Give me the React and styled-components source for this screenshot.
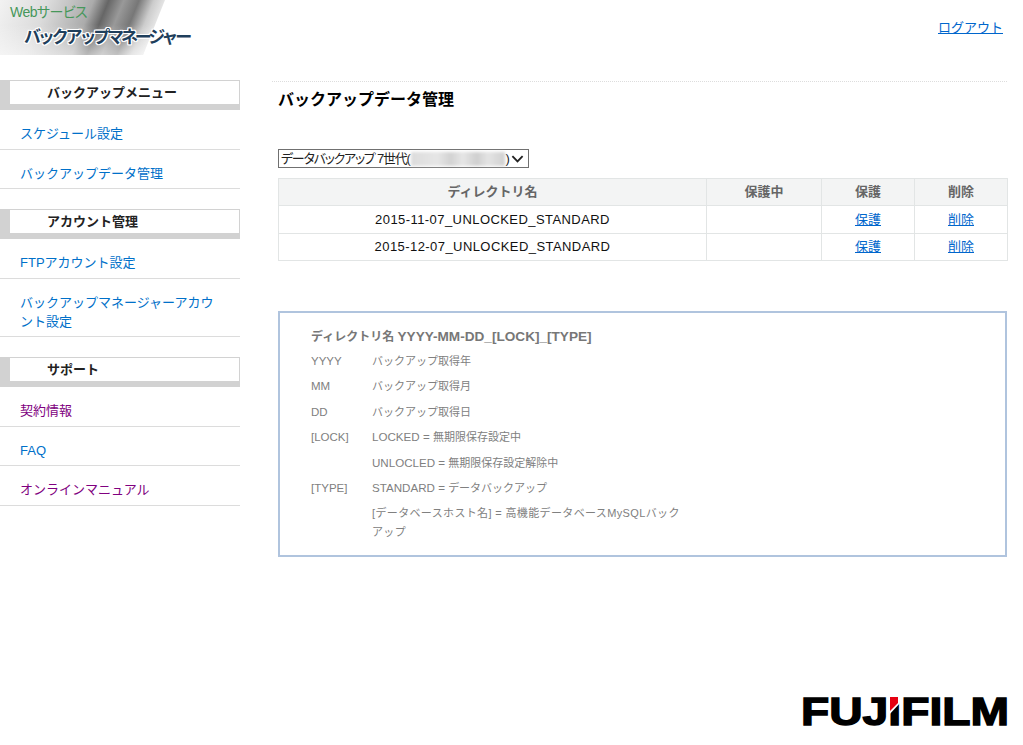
import styled, { createGlobalStyle } from 'styled-components';

const GlobalStyle = createGlobalStyle`
  html, body {
    margin: 0;
    padding: 0;
    background: #fff;
  }
  body {
    font-family: "Liberation Sans", "Noto Sans CJK JP", sans-serif;
    font-size: 13px;
    color: #000;
  }
`;

const Page = styled.div`
  width: 1023px;
  height: 745px;
  display: flex;
  flex-direction: column;
  overflow: hidden;
`;

const Header = styled.header`
  height: 55px;
  flex: none;
  display: flex;
  justify-content: space-between;
  align-items: flex-start;
`;

const Banner = styled.div`
  position: relative;
  width: 165px;
  height: 55px;
  padding: 3px 0 0 10px;
  box-sizing: border-box;
  white-space: nowrap;

  &::before {
    content: '';
    position: absolute;
    inset: 0;
    z-index: 0;
    clip-path: polygon(0 0, 100% 0, 143px 100%, 0 100%);
    background:
      linear-gradient(to bottom, rgba(255, 255, 255, 0) 45%, rgba(255, 255, 255, 0.55) 100%),
      linear-gradient(
        112deg,
        #f2f2f2 0,
        #dcdcdc 45px,
        #ababab 87px,
        #666666 101px,
        #999999 115px,
        #777777 129px,
        #cccccc 143px,
        #ececec 156px
      );
  }
`;

const BannerSmall = styled.div`
  position: relative;
  font-size: 14px;
  line-height: 19px;
  color: #46975a;
  font-feature-settings: "palt";
  letter-spacing: -0.55px;
`;

const BannerTitle = styled.div`
  position: relative;
  margin: 6px 0 0 14px;
  font-size: 17px;
  line-height: 20px;
  font-weight: 700;
  color: #1f3f5c;
  letter-spacing: -3.15px;
  text-shadow: 1px 0 0 #fff, -1px 0 0 #fff, 0 1px 0 #fff, 0 -1px 0 #fff,
    1px 1px 0 #fff, -1px -1px 0 #fff, 1px -1px 0 #fff, -1px 1px 0 #fff;
`;

const LogoutLink = styled.a`
  margin: 19px 20px 0 0;
  line-height: 18px;
  color: #0066cc;
  text-decoration: underline;
`;

const Body = styled.div`
  display: flex;
  align-items: flex-start;
  padding-top: 25px;
`;

const Sidebar = styled.nav`
  width: 240px;
  flex: none;
`;

const SectionTitle = styled.h2`
  margin: 0;
  box-sizing: border-box;
  height: 30px;
  padding-left: 37px;
  border: 1px solid #d2d2d2;
  border-left-width: 10px;
  border-bottom-width: 6px;
  font-size: 13px;
  line-height: 23px;
  font-weight: 700;
  color: #222;
`;

const MenuList = styled.ul`
  list-style: none;
  margin: 0 0 20px;
  padding: 0;
`;

const MenuItem = styled.li`
  padding: 14px 20px 5.5px;
  border-bottom: 1px solid #dcdcdc;
  line-height: 19px;
`;

const MenuLink = styled.a`
  color: ${(p) => (p.$visited ? '#800080' : '#0070c9')};
  text-decoration: none;
`;

const Main = styled.main`
  margin: 1px 0 0 32px;
  width: 735px;
`;

const PageTitle = styled.h1`
  margin: 0 0 38px;
  padding: 7px 0 0 6px;
  border-top: 1px dotted #dddddd;
  font-size: 16px;
  line-height: 22px;
  font-weight: 700;
  color: #000;
`;

const Content = styled.div`
  margin-left: 6px;
`;

const SelectBox = styled.div`
  box-sizing: border-box;
  width: 251px;
  height: 19px;
  margin-bottom: 10px;
  padding: 0 2px;
  border: 1px solid #707070;
  display: flex;
  align-items: center;
  font-size: 13px;
  line-height: 17px;
  color: #222;
  white-space: nowrap;
`;

const SelectLabel = styled.span`
  font-feature-settings: "palt";
  letter-spacing: -1.25px;
`;

const BlurredHost = styled.span`
  display: inline-block;
  width: 94px;
  height: 14px;
  margin: 0 1px;
  background: linear-gradient(
    90deg,
    #dcdcdc 0,
    #e6e6e6 28%,
    #d2d2d2 42%,
    #e6e6e6 55%,
    #cfcfcf 70%,
    #e4e4e4 82%,
    #d0d0d0 100%
  );
  filter: blur(1.5px);
`;

const Chevron = styled.svg`
  width: 13px;
  height: 10px;
  margin: 0 2px 0 auto;
  flex: none;
`;

const DataTable = styled.table`
  width: 730px;
  table-layout: fixed;
  border-collapse: collapse;
  font-size: 13px;
`;

const HeadCell = styled.th`
  height: 26px;
  padding: 0;
  border: 1px solid #e2e5e5;
  background: #f3f4f4;
  color: #666;
  font-weight: 700;
  text-align: center;
  line-height: 18px;
`;

const Cell = styled.td`
  height: 27.5px;
  padding: 1px 0 0;
  box-sizing: border-box;
  border: 1px solid #e2e5e5;
  color: #111;
  text-align: center;
  line-height: 18px;
`;

const NameCell = styled(Cell)`
  letter-spacing: 0.43px;
`;

const TableLink = styled.a`
  color: #0066cc;
  text-decoration: underline;
`;

const Legend = styled.section`
  box-sizing: border-box;
  width: 729px;
  height: 246px;
  margin-top: 50px;
  padding: 14px 31px 0;
  border: 2px solid #b0c4de;
  color: #808080;
  font-size: 11px;
`;

const LegendTitle = styled.div`
  font-size: 12px;
  font-weight: 700;
  line-height: 20px;
  color: #777;
  margin-bottom: 5px;
`;

const LegendCode = styled.span`
  font-size: 13.6px;
  line-height: 1;
`;

const LegendRow = styled.div`
  display: grid;
  grid-template-columns: 61px 310px;
  line-height: 19px;
  margin-bottom: 6.4px;
`;

const LegendLabel = styled.span`
  font-size: 11.5px;
`;

const LegendLatin = styled.span`
  font-size: 11.6px;
  line-height: 1;
`;

const LegendValue = styled.span`
  letter-spacing: ${(p) => (p.$wide ? '0.36px' : '0')};
`;

const rows = [
  ['YYYY', '', 'バックアップ取得年'],
  ['MM', '', 'バックアップ取得月'],
  ['DD', '', 'バックアップ取得日'],
  ['[LOCK]', 'LOCKED = ', '無期限保存設定中'],
  ['', 'UNLOCLED = ', '無期限保存設定解除中'],
  ['[TYPE]', 'STANDARD = ', 'データバックアップ'],
  ['', '', '[データベースホスト名] = 高機能データベースMySQLバックアップ', true],
];

const directories = ['2015-11-07_UNLOCKED_STANDARD', '2015-12-07_UNLOCKED_STANDARD'];

const Footer = styled.footer`
  margin-top: auto;
  padding: 0 13px 10px 0;
  display: flex;
  justify-content: flex-end;
`;

const FujifilmLogo = () => (
  <svg width="210" height="46" viewBox="0 0 210 46" role="img" aria-label="FUJIFILM">
    <text
      x="1"
      y="36"
      textLength="208"
      lengthAdjust="spacingAndGlyphs"
      fontFamily="Liberation Sans"
      fontWeight="700"
      fontSize="39"
      fill="#000"
      stroke="#000"
      strokeWidth="1.4"
    >
      FUJIFILM
    </text>
    <polygon points="87,6 102,6 102,12 87,28" fill="#fff" />
    <polygon points="90,8 98,8 98,14 90,22" fill="#e60012" />
  </svg>
);

const App = () => (
  <Page>
    <GlobalStyle />
    <Header>
      <Banner>
        <BannerSmall>Webサービス</BannerSmall>
        <BannerTitle>バックアップマネージャー</BannerTitle>
      </Banner>
      <LogoutLink href="#">ログアウト</LogoutLink>
    </Header>
    <Body>
      <Sidebar>
        <SectionTitle>バックアップメニュー</SectionTitle>
        <MenuList>
          <MenuItem><MenuLink href="#">スケジュール設定</MenuLink></MenuItem>
          <MenuItem><MenuLink href="#">バックアップデータ管理</MenuLink></MenuItem>
        </MenuList>
        <SectionTitle>アカウント管理</SectionTitle>
        <MenuList>
          <MenuItem><MenuLink href="#">FTPアカウント設定</MenuLink></MenuItem>
          <MenuItem><MenuLink href="#">バックアップマネージャーアカウント設定</MenuLink></MenuItem>
        </MenuList>
        <SectionTitle>サポート</SectionTitle>
        <MenuList>
          <MenuItem><MenuLink href="#" $visited>契約情報</MenuLink></MenuItem>
          <MenuItem><MenuLink href="#">FAQ</MenuLink></MenuItem>
          <MenuItem><MenuLink href="#" $visited>オンラインマニュアル</MenuLink></MenuItem>
        </MenuList>
      </Sidebar>
      <Main>
        <PageTitle>バックアップデータ管理</PageTitle>
        <Content>
          <SelectBox>
            <SelectLabel>データバックアップ 7世代(</SelectLabel>
            <BlurredHost />)
            <Chevron viewBox="0 0 14 10">
              <path d="M1.5 2 L7 7.5 L12.5 2" fill="none" stroke="#222" strokeWidth="2" />
            </Chevron>
          </SelectBox>
          <DataTable>
            <colgroup>
              <col style={{ width: 428 }} />
              <col style={{ width: 115 }} />
              <col style={{ width: 93 }} />
              <col style={{ width: 93 }} />
            </colgroup>
            <thead>
              <tr>
                <HeadCell>ディレクトリ名</HeadCell>
                <HeadCell>保護中</HeadCell>
                <HeadCell>保護</HeadCell>
                <HeadCell>削除</HeadCell>
              </tr>
            </thead>
            <tbody>
              {directories.map((name) => (
                <tr key={name}>
                  <NameCell>{name}</NameCell>
                  <Cell />
                  <Cell><TableLink href="#">保護</TableLink></Cell>
                  <Cell><TableLink href="#">削除</TableLink></Cell>
                </tr>
              ))}
            </tbody>
          </DataTable>
          <Legend>
            <LegendTitle>
              ディレクトリ名 <LegendCode>YYYY-MM-DD_[LOCK]_[TYPE]</LegendCode>
            </LegendTitle>
            {rows.map(([label, code, value, wide]) => (
              <LegendRow key={value}>
                <LegendLabel>{label}</LegendLabel>
                <LegendValue $wide={wide}>
                  {code && <LegendLatin>{code}</LegendLatin>}
                  {value}
                </LegendValue>
              </LegendRow>
            ))}
          </Legend>
        </Content>
      </Main>
    </Body>
    <Footer>
      <FujifilmLogo />
    </Footer>
  </Page>
);

export default App;
